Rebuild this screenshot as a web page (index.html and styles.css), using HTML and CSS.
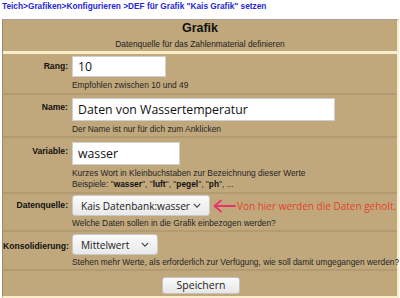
FILE: index.html
```html
<!DOCTYPE html>
<html lang="de">
<head>
<meta charset="utf-8">
<link rel="stylesheet" href="styles.css">
</head>
<body>
<div class="crumbs"><a href="#">Teich</a>&gt;<a href="#">Grafiken</a>&gt;<a href="#">Konfigurieren</a> &gt;<a href="#">DEF für Grafik "Kais Grafik" setzen</a></div>
<div class="panel">
  <div class="head">
    <div class="title">Grafik</div>
    <div class="sub">Datenquelle für das Zahlenmaterial definieren</div>
  </div>
  <div class="row r-rang">
    <div class="lbl">Rang:</div>
    <div class="fld">
      <div class="input w-rang">10</div>
      <div class="hint">Empfohlen zwischen 10 und 49</div>
    </div>
  </div>
  <div class="row r-name">
    <div class="lbl">Name:</div>
    <div class="fld">
      <div class="input w-name">Daten von Wassertemperatur</div>
      <div class="hint">Der Name ist nur für dich zum Anklicken</div>
    </div>
  </div>
  <div class="row r-var">
    <div class="lbl">Variable:</div>
    <div class="fld">
      <div class="input w-var">wasser</div>
      <div class="hint">Kurzes Wort in Kleinbuchstaben zur Bezeichnung dieser Werte<br>Beispiele: "<b>wasser</b>", "<b>luft</b>", "<b>pegel</b>", "<b>ph</b>", ...</div>
    </div>
  </div>
  <div class="row r-src">
    <div class="lbl">Datenquelle:</div>
    <div class="fld">
      <div class="selline">
        <div class="select w-src">Kais Datenbank:wasser<svg class="chev" viewBox="0 0 10 6" width="8" height="5"><path d="M1 1l4 4 4-4" fill="none" stroke="#444" stroke-width="1.5"/></svg></div>
        <svg class="arrow" viewBox="0 0 24 14" width="24" height="14"><path d="M23 7H3M9 1.5L2.5 7 9 12.5" fill="none" stroke="#e8336b" stroke-width="1.8" stroke-linecap="round" stroke-linejoin="round"/></svg>
        <span class="note">Von hier werden die Daten geholt.</span>
      </div>
      <div class="hint">Welche Daten sollen in die Grafik einbezogen werden?</div>
    </div>
  </div>
  <div class="row r-kons">
    <div class="lbl">Konsolidierung:</div>
    <div class="fld">
      <div class="select w-kons">Mittelwert<svg class="chev" viewBox="0 0 10 6" width="8" height="5"><path d="M1 1l4 4 4-4" fill="none" stroke="#444" stroke-width="1.5"/></svg></div>
      <div class="hint">Stehen mehr Werte, als erforderlich zur Verfügung, wie soll damit umgegangen werden?</div>
    </div>
  </div>
  <div class="actions">
    <button class="btn">Speichern</button>
  </div>
</div>
</body>
</html>
```
FILE: styles.css
```css
html, body { margin: 0; padding: 0; background: #fff; }
body { font-family: "Liberation Sans", Arial, sans-serif; }
.crumbs {
  font-size: 8.3px;
  font-weight: bold;
  color: #2727d6;
  padding: 0 0 0 2px;
  height: 19px;
  line-height: 12px;
}
.crumbs a { color: #2727d6; text-decoration: none; }
.panel {
  margin: 0 1px 0 2px;
  background: #c0a87c;
  border-top: 1px solid #a8a098;
  border-left: 1px solid #9c8c70;
  border-right: 2px solid #fbeecb;
  border-bottom: 2px solid #fbeecb;
}
.head {
  text-align: center;
  padding: 1px 0 1px;
  border-bottom: 3px solid #fbefcb;
}
.title { font-size: 12.5px; font-weight: bold; color: #111; line-height: 15px; }
.sub { font-size: 8.4px; color: #222; line-height: 11px; margin-top: 3px; }
.row {
  display: flex;
  border-bottom: 2px solid #b39b71;
  padding: 2px 0 2px;
}
.lbl {
  width: 65px;
  flex: none;
  text-align: right;
  font-size: 8.6px;
  font-weight: bold;
  color: #111;
  line-height: 11px;
  padding-top: 5px;
  white-space: nowrap;
}
.fld { padding-left: 4px; flex: 1; min-width: 0; }
.input {
  background: #fff;
  border: 1px solid #cfcfcf;
  height: 21px;
  box-sizing: border-box;
  font-family: "Open Sans", "DejaVu Sans", sans-serif;
  font-size: 12.3px;
  line-height: 19px;
  padding-left: 5px;
  color: #111;
}
.w-rang { width: 94px; }
.w-name { width: 263px; height: 23px; line-height: 21px; }
.w-var { width: 108px; height: 23px; line-height: 21px; }
.r-name { padding-top: 3px; padding-bottom: 1px; }
.r-var { padding-top: 4px; }
.r-src { padding-top: 1px; padding-bottom: 1px; }
.r-src .hint { margin-top: 2px; }
.r-kons { padding-top: 2px; padding-bottom: 1px; }
.r-kons .hint { margin-top: 2px; }
.r-kons .lbl { padding-top: 7px; }
.r-name .lbl, .r-var .lbl { padding-top: 4px; }
.hint {
  font-size: 8.4px;
  color: #262626;
  line-height: 11px;
  margin-top: 3px;
  white-space: nowrap;
}
.hint b { color: #111; }
.selline { display: flex; align-items: center; }
.select {
  display: flex;
  align-items: center;
  justify-content: space-between;
  height: 21px;
  box-sizing: border-box;
  border: 1px solid #c8c8c8;
  border-radius: 3px;
  background: linear-gradient(#fbfbfb, #e9e9e9);
  font-family: "Open Sans", "DejaVu Sans", sans-serif;
  font-size: 10.1px;
  color: #222;
  padding: 0 8px 0 8px;
  white-space: nowrap;
  flex: none;
}
.w-src { width: 138px; }
.w-kons { width: 86px; }
.arrow { margin-left: 2px; flex: none; }
.note {
  font-family: "Open Sans", "DejaVu Sans", sans-serif;
  font-size: 10px;
  color: #e4432b;
  margin-left: 1px;
  white-space: nowrap;
}
.actions { display: flex; justify-content: center; padding: 6px 0 2px 2px; }
.btn {
  font-family: "Open Sans", "DejaVu Sans", sans-serif;
  font-size: 10.5px;
  color: #222;
  width: 78px;
  height: 17px;
  padding: 0;
  border: 1px solid #c4c4c4;
  border-radius: 3px;
  background: linear-gradient(#fbfbfb, #e6e6e6);
  line-height: 15px;
}
```
